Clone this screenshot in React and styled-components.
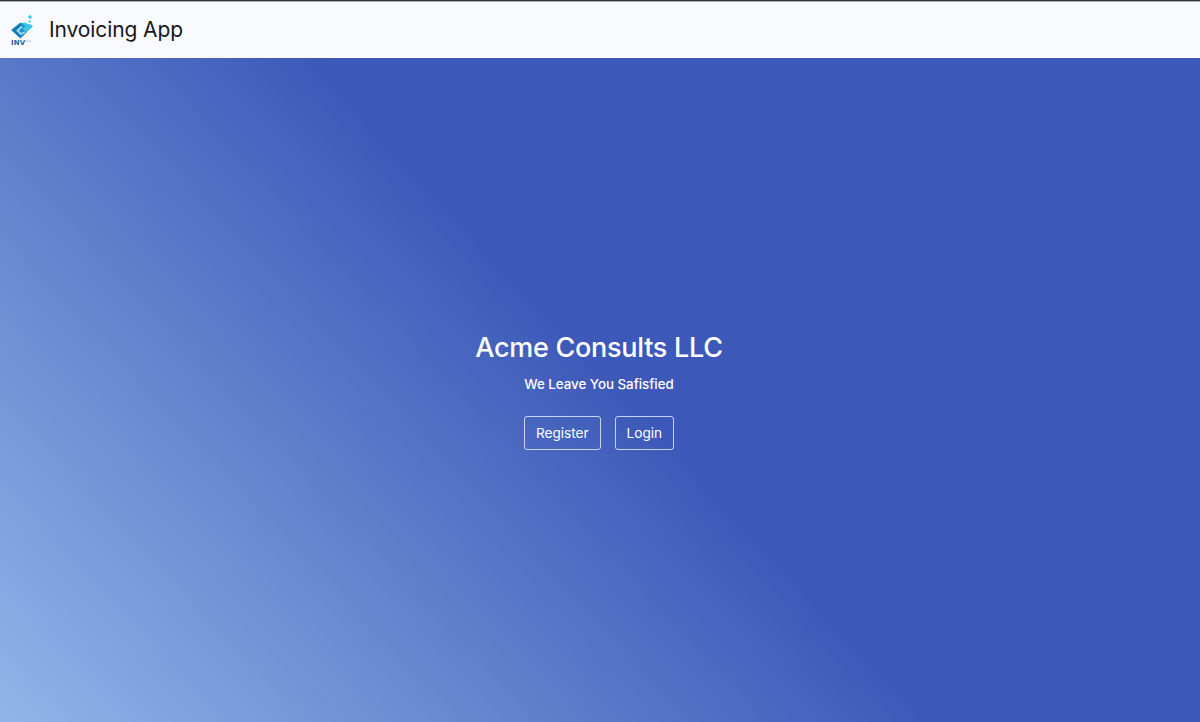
import React from "react";
import styled, { createGlobalStyle } from "styled-components";

const Global = createGlobalStyle`
  html, body { margin: 0; padding: 0; height: 100%; }
  body { font-family: Inter, "Liberation Sans", sans-serif; background: #3c58b8; }
  #root { height: 100%; }
`;
const Page = styled.div`
  height: 722px;
  display: flex;
  flex-direction: column;
  overflow: hidden;
`;
const Navbar = styled.header`
  height: 57px;
  flex: none;
  display: flex;
  align-items: center;
  gap: 14px;
  padding-left: 9px;
  background: #f9fafd;
  border-top: 1px solid #33363a;
  box-shadow: inset 0 1px 0 #a9abae;
`;
const Brand = styled.span`
  font-size: 21px;
  font-weight: 400;
  color: #16181b;
  line-height: 1;
  letter-spacing: -0.1px;
`;
const Hero = styled.main`
  flex: 1;
  display: flex;
  flex-direction: column;
  align-items: center;
  justify-content: center;
  padding-right: 2px;
  background: linear-gradient(47deg, #90b6e8 0%, #3c58b8 52%);
  color: #fff;
`;
const Title = styled.h1`
  margin: 0;
  font-size: 27px;
  font-weight: 500;
  line-height: 34px;
  letter-spacing: -0.27px;
`;
const Tagline = styled.p`
  margin: 9px 0 0;
  font-size: 13.3px;
  font-weight: 500;
  line-height: 20px;
`;
const Actions = styled.div`
  display: flex;
  gap: 14px;
  margin-top: 22px;
`;
const OutlineButton = styled.button`
  height: 34px;
  padding: 0 11px;
  font-family: inherit;
  font-size: 13.6px;
  font-weight: 400;
  color: #fff;
  background: transparent;
  border: 1px solid rgba(255, 255, 255, 0.72);
  border-radius: 3px;
`;
const SmallMark = styled.text`
  font-family: "DejaVu Sans", "Liberation Sans", sans-serif;
  font-size: 7px;
  font-weight: 700;
  letter-spacing: 0.2px;
  fill: #1c5f97;
`;
const Logo = () => (
  <svg width="26" height="32" viewBox="0 0 26 32" aria-hidden="true">
    <circle cx="21" cy="3" r="1.7" fill="#2bc8ea" />
    <path d="M12 9 L16 8.5 L19 10 L22 10.5 L24 12.5 L21 15 L18 18 L12 15 Z" fill="#39c8ec" />
    <rect x="19.5" y="6.5" width="2" height="2" fill="#39c8ec" />
    <path d="M11.5 8.5 L16.5 12 L13 15 L18 18 L11.5 24.5 L2 16 Z" fill="#1b8ecb" />
    <path d="M3.5 16 L11 9.5 L12.5 11.5 L6.5 16.5 L11 21.5 L10 23 Z" fill="#1477ae" />
    <path d="M13 12.5 L8.5 16.5 L12 20 L16 18" fill="none" stroke="#a9dff3" strokeWidth="1.8" />
    <SmallMark x="2" y="31">INV</SmallMark>
    <rect x="16" y="26.5" width="6" height="1.4" fill="#c5d3e8" />
  </svg>
);

export default function App() {
  return (
    <>
      <Global />
      <Page>
        <Navbar>
          <Logo />
          <Brand>Invoicing App</Brand>
        </Navbar>
        <Hero>
          <Title>Acme Consults LLC</Title>
          <Tagline>We Leave You Safisfied</Tagline>
          <Actions>
            <OutlineButton>Register</OutlineButton>
            <OutlineButton>Login</OutlineButton>
          </Actions>
        </Hero>
      </Page>
    </>
  );
}
